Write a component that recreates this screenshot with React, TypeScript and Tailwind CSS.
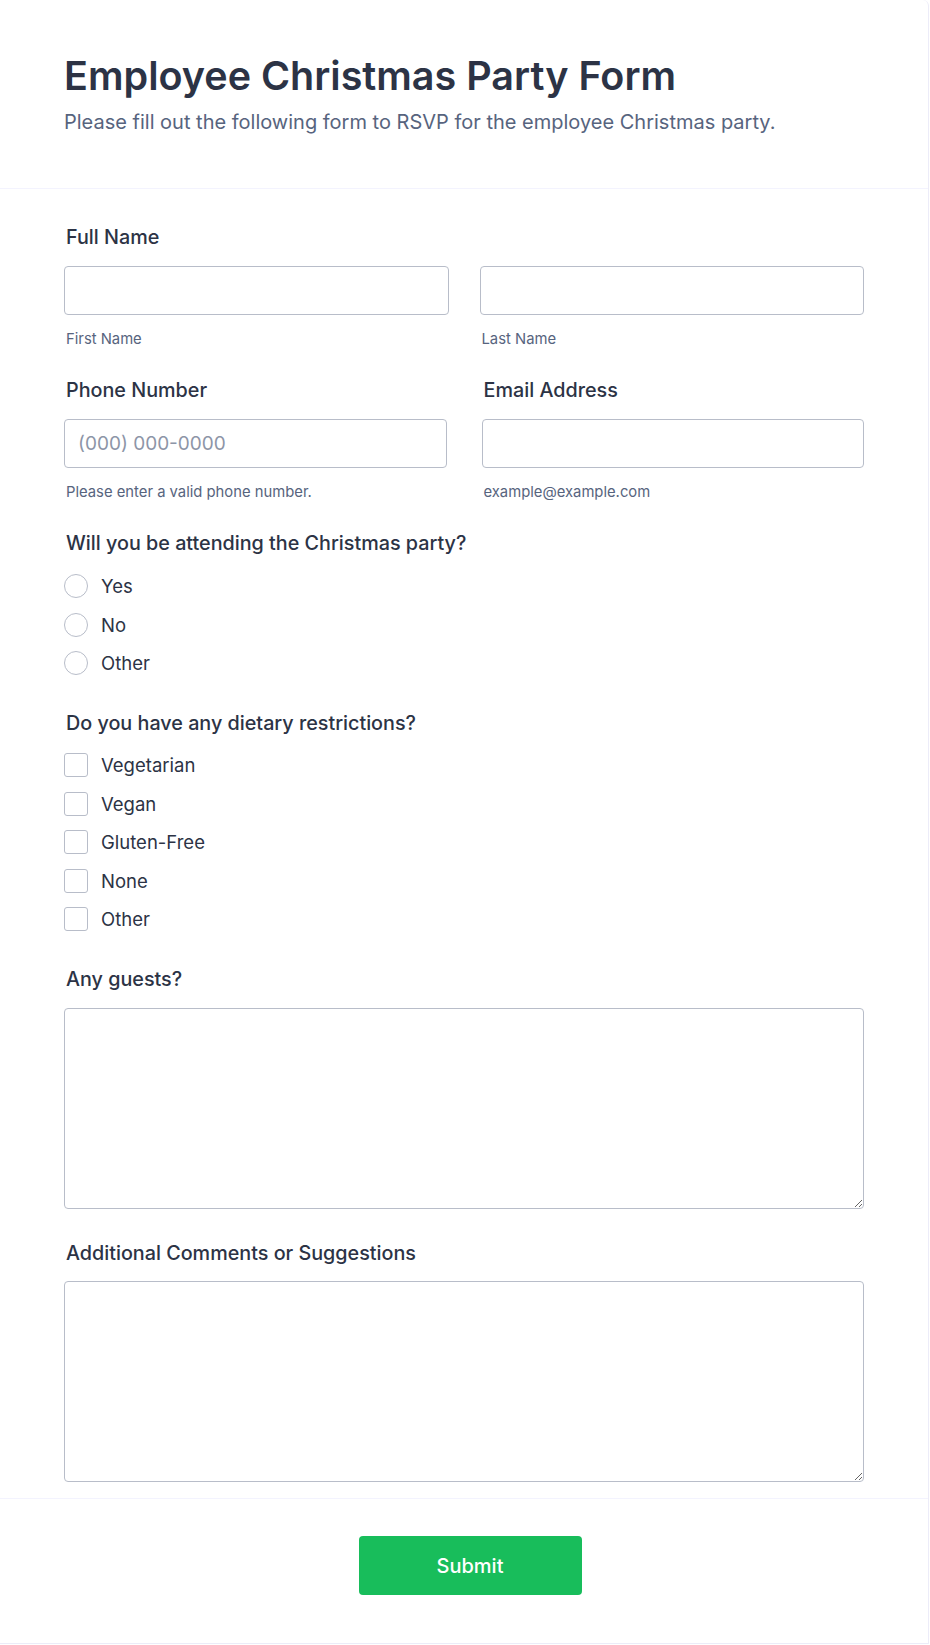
import React from 'react';

const labelCls = "block pl-[2px] text-[19.75px] leading-6 font-medium text-[#2c3345]";
const subCls = "block pl-[2px] text-[14.8px] leading-5 text-[#57647e]";
const optCls = "text-[18.5px] leading-6 text-[#2c3345]";
const inputCls =
    "block w-full h-[49px] rounded-[4px] border border-[#b8bdc9] bg-white px-[13px] text-[19px] text-[#2c3345] placeholder:text-[#8d95a7] outline-none";
const areaCls =
    "block w-full rounded-[4px] border border-[#b8bdc9] bg-white px-[13px] py-[10px] text-[18px] text-[#2c3345] outline-none";

const attendOptions = ['Yes', 'No', 'Other'];
const dietOptions = ['Vegetarian', 'Vegan', 'Gluten-Free', 'None', 'Other'];

const App: React.FC = () => {
    return (
        <div className="min-h-screen bg-white font-['Inter','Noto_Sans',sans-serif]">
            <div className="w-[929px] bg-white border-r border-b border-[#ececf8] rounded-tr-[6px]">
                {/* header */}
                <header className="px-16 pt-[52px] pb-[52px] border-b border-[#f3f3fe]">
                    <h1 className="text-[39.5px] leading-[48px] font-semibold text-[#2c3345]">
                        Employee Christmas Party Form
                    </h1>
                    <p className="mt-2 text-[20px] leading-7 text-[#57647e]">
                        Please fill out the following form to RSVP for the employee Christmas party.
                    </p>
                </header>

                <main className="pl-16 w-[864px] pt-[36px] pb-4">
                    {/* full name */}
                    <section>
                        <label className={labelCls}>Full Name</label>
                        <div className="mt-[17px] grid grid-cols-2 gap-x-[31px]">
                            <div>
                                <input className={inputCls} type="text" />
                                <span className={`${subCls} mt-[14px]`}>First Name</span>
                            </div>
                            <div>
                                <input className={inputCls} type="text" />
                                <span className={`${subCls} mt-[14px]`}>Last Name</span>
                            </div>
                        </div>
                    </section>

                    {/* phone + email */}
                    <section className="mt-[29px] grid grid-cols-2 gap-x-[35px]">
                        <div>
                            <label className={labelCls}>Phone Number</label>
                            <input className={`${inputCls} mt-[17px]`} type="tel" placeholder="(000) 000-0000" />
                            <span className={`${subCls} mt-[14px]`}>Please enter a valid phone number.</span>
                        </div>
                        <div>
                            <label className={labelCls}>Email Address</label>
                            <input className={`${inputCls} mt-[17px]`} type="email" />
                            <span className={`${subCls} mt-[14px]`}>example@example.com</span>
                        </div>
                    </section>

                    {/* attending */}
                    <section className="mt-[29px]">
                        <label className={labelCls}>Will you be attending the Christmas party?</label>
                        <div className="mt-[19px] flex flex-col gap-[14.5px]">
                            {attendOptions.map((opt) => (
                                <label key={opt} className="flex items-center gap-[13px] h-6">
                                    <span className="w-6 h-6 rounded-full border border-[#b8bdc9] bg-white" />
                                    <span className={optCls}>{opt}</span>
                                </label>
                            ))}
                        </div>
                    </section>

                    {/* dietary */}
                    <section className="mt-[36px]">
                        <label className={labelCls}>Do you have any dietary restrictions?</label>
                        <div className="mt-[18px] flex flex-col gap-[14.5px]">
                            {dietOptions.map((opt) => (
                                <label key={opt} className="flex items-center gap-[13px] h-6">
                                    <span className="w-6 h-6 rounded-[3px] border border-[#b8bdc9] bg-white" />
                                    <span className={optCls}>{opt}</span>
                                </label>
                            ))}
                        </div>
                    </section>

                    {/* guests */}
                    <section className="mt-[36px]">
                        <label className={labelCls}>Any guests?</label>
                        <textarea className={`${areaCls} mt-[17px] h-[201px]`} />
                    </section>

                    {/* comments */}
                    <section className="mt-[32px]">
                        <label className={labelCls}>Additional Comments or Suggestions</label>
                        <textarea className={`${areaCls} mt-[16px] h-[201px]`} />
                    </section>
                </main>

                {/* footer */}
                <footer className="border-t border-[#f3f3fe] pl-[12px] pt-[37px] pb-[48px] flex justify-center">
                    <button
                        type="button"
                        className="w-[223px] h-[59px] rounded-[4px] bg-[#18bd5b] text-white text-[20px] font-medium"
                    >
                        Submit
                    </button>
                </footer>
            </div>
        </div>
    );
};

export default App;
